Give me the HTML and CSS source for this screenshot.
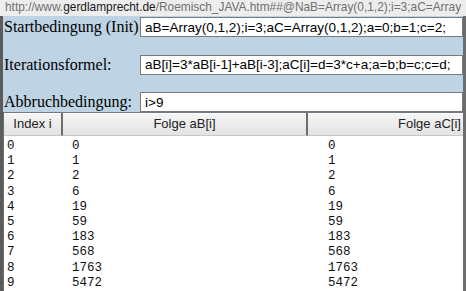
FILE: index.html
```html
<!DOCTYPE html>
<html lang="de">
<head>
  <meta charset="UTF-8">
  <title>Roemisch JAVA</title>
  <link rel="stylesheet" href="styles.css">
</head>
<body>
  <div class="urlbar">http://www.<span class="host">gerdlamprecht.de</span>/Roemisch_JAVA.htm##@NaB=Array(0,1,2);i=3;aC=Array</div>

  <div class="page">
    <!-- Eingaben -->
    <div class="params">
      <div class="row first">
        <label>Startbedingung (Init)</label>
        <input type="text" value="aB=Array(0,1,2);i=3;aC=Array(0,1,2);a=0;b=1;c=2;">
      </div>
      <div class="row">
        <label>Iterationsformel:</label>
        <input type="text" value="aB[i]=3*aB[i-1]+aB[i-3];aC[i]=d=3*c+a;a=b;b=c;c=d;">
      </div>
      <div class="row">
        <label>Abbruchbedingung:</label>
        <input type="text" value="i&gt;9">
      </div>
    </div>

    <!-- Ergebnis -->
    <div class="result">
      <div class="head">
        <div class="col">Index i</div>
        <div class="col">Folge aB[i]</div>
        <div class="col">Folge aC[i]</div>
      </div>
      <div class="rows" id="rows"></div>
    </div>
  </div>

  <script>
    var aB = [0, 1, 2], aC = [0, 1, 2];
    var a = 0, b = 1, c = 2, d;
    for (var i = 3; !(i > 9); i++) {
      aB[i] = 3 * aB[i - 1] + aB[i - 3];
      aC[i] = d = 3 * c + a; a = b; b = c; c = d;
    }
    var html = '';
    for (var k = 0; k < aB.length; k++) {
      html += '<div class="line"><span>' + k + '</span><span>' + aB[k] + '</span><span>' + aC[k] + '</span></div>';
    }
    document.getElementById('rows').innerHTML = html;
  </script>
</body>
</html>
```

FILE: styles.css
```css
body {
  margin: 0;
  height: 291px;
  overflow: hidden;
  background: #bed3e3;
  display: flex;
  flex-direction: column;
}
.urlbar {
  height: 16px;
  line-height: 15px;
  padding-left: 5px;
  background: #ededed;
  color: #707070;
  font-family: "Liberation Sans", Arial, sans-serif;
  font-size: 11.9px;
  white-space: nowrap;
  overflow: hidden;
}
.urlbar .host { color: #1a1a1a; }
.page {
  flex: 1;
  display: flex;
  flex-direction: column;
  border-left: 3px solid #5c5c5c;
  border-right: 3px solid #6d6d6d;
  min-height: 0;
}
.params {
  padding-top: 1px;
}
.row {
  display: grid;
  grid-template-columns: 137px 1fr;
  align-items: center;
  height: 20px;
  margin-top: 17.5px;
}
.row.first { margin-top: 0; }
.row label {
  padding-left: 1px;
  font-family: "Liberation Serif", "Times New Roman", serif;
  font-size: 16px;
  color: #000;
  white-space: nowrap;
}
.row input {
  box-sizing: border-box;
  height: 20px;
  margin: 0;
  padding: 0 4px;
  border: 1px solid #7a7a7a;
  background: #fff;
  font-family: "Liberation Sans", Arial, sans-serif;
  font-size: 13.5px;
  color: #000;
  outline: none;
}
.result {
  flex: 1;
  display: flex;
  flex-direction: column;
  border-left: 1px solid #6d6d6d;
  overflow: hidden;
}
.head {
  display: grid;
  grid-template-columns: 59px 245px 245px;
  height: 23px;
  border-top: 1px solid #6f7a84;
  background: linear-gradient(#f6f6f6, #e2e2e2);
  box-shadow: inset 0 1px 0 #ffffff;
}
.head .col {
  line-height: 22px;
  text-align: center;
  font-family: "Liberation Sans", Arial, sans-serif;
  font-size: 13px;
  color: #222;
  border-right: 2px solid #6d6d6d;
  border-bottom: 1px solid #c8c8c8;
  white-space: nowrap;
}
.rows {
  flex: 1;
  background: #fff;
  padding: 3px 0 0 3px;
  font-family: "Liberation Mono", "Courier New", monospace;
  font-size: 12.5px;
  color: #111;
}
.line {
  display: grid;
  grid-template-columns: 65px 256px 1fr;
  height: 15.2px;
  line-height: 15.2px;
}
```
